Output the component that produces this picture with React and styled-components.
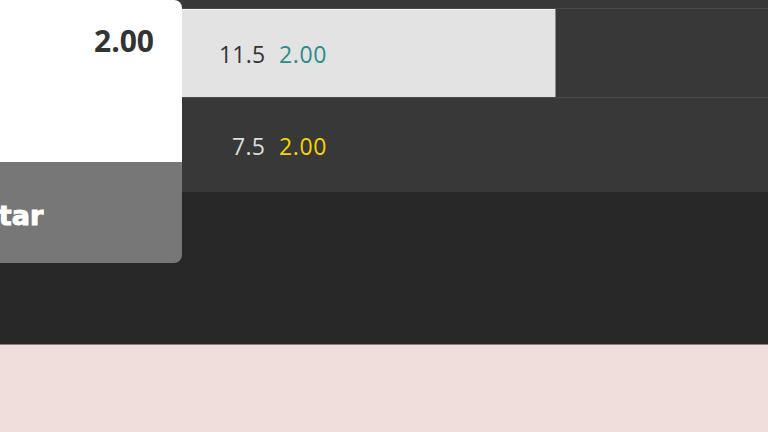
import React from "react";
import styled, { createGlobalStyle } from "styled-components";

const Global = createGlobalStyle`
  html, body { margin: 0; padding: 0; }
  body { width: 768px; height: 432px; overflow: hidden; background: #f0dedb; font-family: "Open Sans", "Noto Sans", sans-serif; }
`;

const Page = styled.div`
  position: relative;
  width: 768px;
  height: 432px;
  display: flex;
  flex-direction: column;
  overflow: hidden;
`;

const Market = styled.div`
  background: #383838;
  padding-top: 8px;
  display: flex;
  flex-direction: column;
`;

const Row = styled.div`
  display: grid;
  grid-template-columns: 182px 374px 1fr;
  height: ${(p) => p.$h}px;
  box-sizing: border-box;
  border-top: ${(p) => (p.$bordered ? "1px solid #4a4a4a" : "none")};
  border-bottom: ${(p) => (p.$bordered ? "1px solid #4a4a4a" : "none")};
`;

const Cell = styled.div`
  display: flex;
  align-items: center;
  background: ${(p) => (p.$active ? "#e3e3e3" : "transparent")};
  box-shadow: ${(p) => (p.$active ? "inset -1px 0 0 #8c8c8c, inset 0 1px 0 #f2f2f2" : "none")};
  padding-left: 37px;
  padding-top: ${(p) => p.$shift || 0}px;
  gap: 14px;
`;

const Line = styled.span`
  width: 46px;
  text-align: right;
  font-size: 23px;
  letter-spacing: 0.2px;
  color: ${(p) => (p.$active ? "#333" : "#dddddd")};
`;

const Odds = styled.span`
  font-size: 23px;
  letter-spacing: 0.6px;
  color: ${(p) => (p.$active ? "#2a8c8c" : "#f5d400")};
`;

const Lower = styled.div`
  height: 152px;
  background: #282828;
  border-bottom: 1px solid #8a8080;
`;

const Pink = styled.div`
  flex: 1;
  background: #f0dedb;
`;

const Slip = styled.div`
  position: absolute;
  top: 0;
  left: -200px;
  width: 382px;
  display: flex;
  flex-direction: column;
`;

const SlipBody = styled.div`
  height: 162px;
  background: #ffffff;
  border-top-right-radius: 8px;
  display: flex;
  justify-content: flex-end;
  align-items: flex-start;
  padding: 20px 28px 0 0;
  box-sizing: border-box;
`;

const SlipOdds = styled.span`
  font-size: 30px;
  font-weight: 700;
  color: #333333;
  line-height: 42px;
`;

const SlipButton = styled.div`
  height: 101px;
  background: #777777;
  border-bottom-right-radius: 8px;
  display: flex;
  align-items: center;
  padding-left: 124px;
  padding-top: 5px;
  box-sizing: border-box;
  font-family: "DejaVu Sans", sans-serif;
  font-weight: 700;
  font-size: 27px;
  color: #ffffff;
  -webkit-text-stroke: 1px #ffffff;
`;

const rows = [
  { line: "11.5", odds: "2.00", active: true, h: 90, bordered: true, shift: 1 },
  { line: "7.5", odds: "2.00", active: false, h: 94, bordered: false, shift: 2 },
];

export default function App() {
  return (
    <Page>
      <Global />
      <Market>
        {rows.map((r) => (
          <Row key={r.line} $h={r.h} $bordered={r.bordered}>
            <Cell />
            <Cell $active={r.active} $shift={r.shift}>
              <Line $active={r.active}>{r.line}</Line>
              <Odds $active={r.active}>{r.odds}</Odds>
            </Cell>
            <Cell />
          </Row>
        ))}
      </Market>
      <Lower />
      <Pink />
      <Slip>
        <SlipBody>
          <SlipOdds>2.00</SlipOdds>
        </SlipBody>
        <SlipButton>Apostar</SlipButton>
      </Slip>
    </Page>
  );
}
